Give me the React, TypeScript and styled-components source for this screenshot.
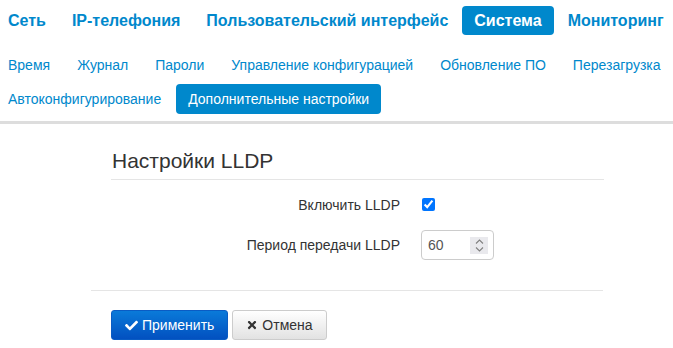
import React from "react";
import styled, { createGlobalStyle, css } from "styled-components";
import { FaCheck, FaTimes } from "react-icons/fa";

const GlobalStyle = createGlobalStyle`
  html, body {
    margin: 0;
    padding: 0;
    background: #ffffff;
    font-family: "Liberation Sans", Arial, Helvetica, sans-serif;
    font-size: 14px;
    color: #333333;
  }
  * { box-sizing: border-box; }
`;

const Header = styled.header`
  padding: 6px 0 7px 0;
  border-bottom: 3px solid #dddddd;
`;

const NavRow = styled.nav<{ $sub?: boolean }>`
  display: flex;
  gap: ${(p) => (p.$sub ? "3px" : "2px")};
  margin-left: -4px;
  margin-top: ${(p) => (p.$sub ? "4px" : "0")};
`;

const MainNav = styled(NavRow)`
  margin-bottom: 15px;
`;

const NavItem = styled.a<{ $active?: boolean; $main?: boolean }>`
  display: block;
  padding: 0 12px;
  border-radius: 4px;
  white-space: nowrap;
  text-decoration: none;
  cursor: pointer;
  ${(p) =>
    p.$main
      ? css`
          height: 29px;
          line-height: 29px;
          font-size: 16px;
          font-weight: bold;
        `
      : css`
          height: 30px;
          line-height: 30px;
          font-size: 14px;
        `}
  color: ${(p) => (p.$active ? "#ffffff" : "#0088cc")};
  background: ${(p) => (p.$active ? "#0088cc" : "transparent")};
`;

const Main = styled.main`
  margin-left: 91px;
  width: 513px;
`;

const Legend = styled.h2`
  margin: 22px 0 10px 20px;
  padding: 0 0 3px 1px;
  font-size: 21px;
  font-weight: normal;
  line-height: 30px;
  color: #333333;
  border-bottom: 1px solid #e5e5e5;
`;

const Fields = styled.div`
  display: flex;
  flex-direction: column;
  gap: 10px;
`;

const FormRow = styled.div`
  display: flex;
  align-items: center;
  height: 30px;
`;

const Label = styled.label`
  width: 309px;
  text-align: right;
  font-size: 14px;
  line-height: 20px;
  color: #333333;
`;

const Control = styled.div`
  margin-left: 21px;
  display: flex;
  align-items: center;
`;

const Checkbox = styled.input`
  width: 13px;
  height: 13px;
  margin: -1px 0 0 1px;
`;

const NumberBox = styled.div`
  display: flex;
  align-items: center;
  width: 73px;
  height: 30px;
  border: 1px solid #cccccc;
  border-radius: 4px;
  padding: 0 5px 0 6px;
  background: #ffffff;
`;

const NumberText = styled.input`
  flex: 1;
  min-width: 0;
  border: none;
  outline: none;
  padding: 0;
  font-family: "Liberation Sans", Arial, sans-serif;
  font-size: 14px;
  color: #555555;
  background: transparent;
`;

const Spinner = styled.span`
  display: flex;
  flex-direction: column;
  align-items: center;
  justify-content: center;
  gap: 3px;
  width: 18px;
  height: 17px;
  background: #e9e9ed;
`;

const Footer = styled.div`
  margin-top: 30px;
  width: 512px;
  border-top: 1px solid #e5e5e5;
  padding: 19px 0 0 20px;
  display: flex;
  gap: 4px;
`;

const Button = styled.button<{ $primary?: boolean }>`
  display: flex;
  align-items: center;
  gap: 4px;
  height: 30px;
  padding: 0 13px;
  border-radius: 3px;
  font-family: "Liberation Sans", Arial, sans-serif;
  font-size: 14px;
  cursor: pointer;
  ${(p) =>
    p.$primary
      ? css`
          color: #ffffff;
          border: 1px solid #0a5cc4;
          background: linear-gradient(to bottom, #0a7ad9 0%, #0250c0 100%);
        `
      : css`
          color: #333333;
          border: 1px solid #cccccc;
          background: linear-gradient(to bottom, #ffffff 0%, #e2e2e2 100%);
        `}
  svg {
    flex: none;
  }
`;

const mainItems = ["Сеть", "IP-телефония", "Пользовательский интерфейс", "Система", "Мониторинг"];
const subRow1 = ["Время", "Журнал", "Пароли", "Управление конфигурацией", "Обновление ПО", "Перезагрузка"];
const subRow2 = ["Автоконфигурирование", "Дополнительные настройки"];

const Chevron = ({ up }: { up?: boolean }) => (
  <svg width="9" height="5" viewBox="0 0 9 5">
    <path
      d={up ? "M1 4.5 L4.5 1 L8 4.5" : "M1 0.5 L4.5 4 L8 0.5"}
      fill="none"
      stroke="#808080"
      strokeWidth="1.1"
    />
  </svg>
);

export default function App() {
  return (
    <>
      <GlobalStyle />
      <Header>
        <MainNav>
          {mainItems.map((t) => (
            <NavItem key={t} $main $active={t === "Система"}>
              {t}
            </NavItem>
          ))}
        </MainNav>
        <NavRow $sub>
          {subRow1.map((t) => (
            <NavItem key={t}>{t}</NavItem>
          ))}
        </NavRow>
        <NavRow $sub>
          {subRow2.map((t) => (
            <NavItem key={t} $active={t === "Дополнительные настройки"}>
              {t}
            </NavItem>
          ))}
        </NavRow>
      </Header>
      <Main>
        <Legend>Настройки LLDP</Legend>
        <Fields>
          <FormRow>
            <Label>Включить LLDP</Label>
            <Control>
              <Checkbox type="checkbox" defaultChecked />
            </Control>
          </FormRow>
          <FormRow>
            <Label>Период передачи LLDP</Label>
            <Control>
              <NumberBox>
                <NumberText type="text" defaultValue="60" />
                <Spinner>
                  <Chevron up />
                  <Chevron />
                </Spinner>
              </NumberBox>
            </Control>
          </FormRow>
        </Fields>
        <Footer>
          <Button $primary>
            <FaCheck size={13} />
            Применить
          </Button>
          <Button>
            <FaTimes size={12} />
            Отмена
          </Button>
        </Footer>
      </Main>
    </>
  );
}
